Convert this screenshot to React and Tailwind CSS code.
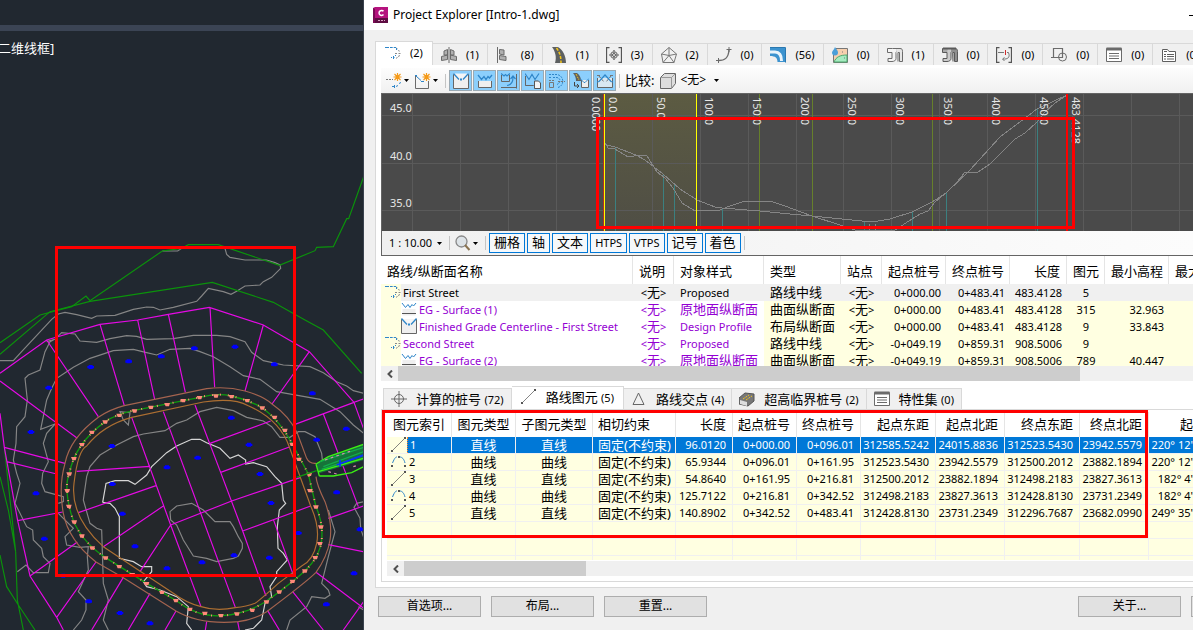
import { useState } from "react";
import clsx from "clsx";

// 16x16 icons used by the tabs, toolbars and tables
const ICONS = {
  alignment: (
    <g fill="none">
      <path d="M0 2.500h3M5 2.500h2M9 2.500h2M3.500 2v1M7.800 2v1" stroke="#2f86c9" />
      <path d="M11 3l1.500.8M13.500 5l.8 1.500" stroke="#8a8a8a" />
      <path d="M10 8.500h2M13.500 8.500h2" stroke="#8a8a8a" />
      <path d="M14.500 10l-1 2M12.500 12.500l-1.500.8" stroke="#8a8a8a" />
      <path d="M6 12.500h1M8.500 12.500h1M8.500 11v3M10.500 10v1M11.500 3v2" stroke="#2f86c9" />
    </g>
  ),
  assembly: (
    <g stroke="#6b6b6b" fill="#b0b0b0">
      <path d="M8 0v16" fill="none" />
      <path d="M6.500 2.500l-3.500 1.500v4h3.500zM6.500 8l-6 1.500v4l6-1z" />
      <path d="M9.500 2.500l3.500 1.500v4h-3.500zM9.500 8l6 1.500v4l-6-1z" />
    </g>
  ),
  subassembly: (
    <g stroke="#6b6b6b" fill="#b0b0b0">
      <path d="M1.500 0v16" fill="none" />
      <path d="M3.500 2.500l4.500.5v5l-4.500-1zM3.500 8.500l6.500 1v4l-6.500-1z" />
    </g>
  ),
  corridor: (
    <g>
      <path d="M1 0h6c5 3 8 9 8 16H4C6 10 4 4 1 0z" fill="#5d6061" />
      <path d="M5.500 1c3 4 4.500 8 4.500 15" stroke="#f5c518" strokeWidth="1.500" strokeDasharray="3 1.500" fill="none" />
    </g>
  ),
  pointGroup: (
    <g fill="none" stroke="#555">
      <path d="M3.500 .5H.5v15h3M12.500 .5h3v15h-3" strokeWidth="1.300" />
      <path d="M8 3v2M8 11v2M3.500 8h2M10.500 8h2" stroke="#777" strokeWidth="1.500" />
      <path d="M5.500 5.500h5v5h-5zM8 3.500L12.500 8 8 12.500 3.500 8z" stroke="#888" />
      <circle cx="8" cy="8" r="1.500" fill="#efefef" stroke="#555" />
    </g>
  ),
  surface: (
    <g fill="none" stroke="#777">
      <path d="M8 .5L15.500 7 13 15.500H2L.5 7z" />
      <path d="M8 .5v8L.5 7M8 8.500L15.500 7M8 8.500l-6 7M8 8.500l5 7" />
    </g>
  ),
  featureLine: (
    <g fill="none" stroke="#6b6b6b">
      <path d="M2.500 13.500c6 0 10-2 10.500-11" strokeWidth="1.300" />
      <path d="M0 13.500h5M2.500 11v5M10.500 2.500h5M13 0v5" />
    </g>
  ),
  pipe: (
    <g>
      <path d="M0 1h16v14H7.500c0-4-2-6-7.500-6z" fill="#3c93cf" />
      <path d="M0 5h5c4.500 0 6.500 3 6.500 9" fill="none" stroke="#e9f4fb" strokeWidth="3" />
      <path d="M0 .5h15.500v15" fill="none" stroke="#2a78b0" />
    </g>
  ),
  catchment: (
    <g>
      <path d="M4 1.500h11.500v14H1.500V8z" fill="#f6cfae" stroke="#777" />
      <path d="M2 15c2-5 6-7 13-7v7z" fill="#a5ebc0" stroke="#4ca76d" />
      <path d="M3 0c2 3 3 4 3 5.500a3 3 0 01-6 0C0 4 2 3 3 0z" fill="#4a9fd8" />
      <path d="M10 5h1M12 11h1" stroke="#777" />
    </g>
  ),
  network: (
    <g fill="none" stroke="#6b6b6b">
      <path d="M.5 1.500h5c2 0 2 3 1 4h-6z" fill="#f5f5f5" />
      <path d="M6 1.500h3c2 1 1 3 0 4v6c0 2-2 3-4 3H1v-3h4v-6" fill="#f5f5f5" />
      <path d="M9 1.500h4c2 0 2.500 1 2.500 3v10h-3v-9H11v9" fill="#e6e6e6" />
    </g>
  ),
  pressure: (
    <g fill="none" stroke="#5a5a5a">
      <path d="M.5 1.500h5c2 0 2 3 1 4h-6z" fill="#aaa" />
      <path d="M6 1.500h3c2 1 1 3 0 4v6c0 2-2 3-4 3H1v-3h4v-6" fill="#ccc" />
      <path d="M9 1.500h4c2 0 2.500 1 2.500 3v10h-3v-9H11v9" fill="#8f8f8f" />
      <path d="M1 1.500h13" strokeWidth="2" />
    </g>
  ),
  bracket: (
    <g fill="none" stroke="#555">
      <path d="M3.500.5h-3v15h3M12.500.5h3v15h-3" strokeWidth="1.300" />
      <path d="M2 5.500h6M11 5.500h1.500c2 5-1 7-5.500 6.500M8.500 10.500l-2 1.500 2 2" stroke="#777" />
      <path d="M9.500 3v5" stroke="#d12b2b" />
    </g>
  ),
  shapes: (
    <g fill="none" stroke="#6b6b6b">
      <path d="M2.500 1.500h9v9h-9zM0 10.500h4" strokeWidth="1.200" />
      <circle cx="11.500" cy="10" r="4" />
    </g>
  ),
  list: (
    <g fill="none" stroke="#6b6b6b">
      <path d="M.5 1.500h15v13H.5z" fill="#fff" />
      <path d="M.5 2h15" strokeWidth="3" />
      <path d="M3 6.500h10M3 9h10M3 11.500h10" />
    </g>
  ),
  report: (
    <g fill="none" stroke="#5f5f5f">
      <path d="M1.500 14.500v-12h5l1.500 2h6.500v10z" fill="#fff" />
      <path d="M3 7.500h2M6 7.500h7M3 9.500h2M6 9.500h7M3 12h2M6 12h7M3 4.500h3" />
    </g>
  ),
  newAlignment: (
    <g fill="none">
      <path d="M0 6.500h2M3 6.500h2M6 6.500h1" stroke="#777" />
      <path d="M14.500 9l-1 2M12 12.500l-2 1M6 13.500h3M8.500 12v3" stroke="#2f86c9" />
      <path d="M11.500 0v8M7.500 4h8M8.500 1l6 6M14.500 1l-6 6" stroke="#f59a18" strokeWidth="1.200" />
      <circle cx="11.500" cy="4" r="2" fill="#f59a18" />
    </g>
  ),
  newProfile: (
    <g fill="none">
      <path d="M.5 2v13.500h13V8" stroke="#6b6b6b" />
      <path d="M0 2.500h2M1 3l5 4.500M6 8.500h3" stroke="#2f86c9" />
      <path d="M11.500 0v8M7.500 4h8M8.500 1l6 6M14.500 1l-6 6" stroke="#f59a18" strokeWidth="1.200" />
      <circle cx="11.500" cy="4" r="2" fill="#f59a18" />
    </g>
  ),
  layoutProfile: (
    <g fill="none">
      <path d="M.5 1v14.500h15V1" stroke="#666" fill="#efefef" />
      <path d="M0 0h16v1l-6 6H6L0 1z" fill="#fff" fillOpacity=".4" />
      <path d="M.5 .5L6 6.500M10 6.500l5.500-6" stroke="#2f86c9" strokeWidth="1.300" />
      <path d="M7 6.500h2" stroke="#2f86c9" strokeWidth="2" />
    </g>
  ),
  surfaceProfile: (
    <g fill="none">
      <path d="M1.500 8v6.500h13V8" fill="#efefef" />
      <path d="M1 2l3.500 4.500L7 3.500l2 3 2-3 1.500 1.500L15 2" stroke="#2f86c9" />
      <path d="M1 12.500h14" stroke="#555" />
    </g>
  ),
  surfaceOutline: (
    <g fill="none">
      <path d="M1.500 8v6.500h13V8" stroke="#666" fill="#efefef" />
      <path d="M1 2l3.500 4.500L7 3.500l2 3 2-3 1.500 1.500L15 2" stroke="#2f86c9" strokeWidth="1.300" />
    </g>
  ),
  superimpose: (
    <g fill="none">
      <path d="M.5 2v6.500h8V2M15.500 1v14.500M0 14.500h16" stroke="#666" />
      <path d="M0 .5l3 2.500 1.500-1.500L6 3l3-2.500M6 12.500c4-.5 6-3 6-8M9.500 6L12 3l2.500 3" stroke="#2f86c9" strokeWidth="1.200" />
    </g>
  ),
  copyProfile: (
    <g fill="none">
      <path d="M.5 3v9.500h8M.5 12.500h8" stroke="#666" />
      <path d="M0 .5l4 6 3-5 3 5 4-6" stroke="#2f86c9" strokeWidth="1.200" />
      <path d="M9.500 8h4l2 2v5.500h-6z" stroke="#555" fill="#f4f4f4" />
    </g>
  ),
  offsets: (
    <g fill="none">
      <path d="M0 1.500h8c7 1 8 11 1 13M4 4.500h4c4 1 4 5 0 7M0 4.500h2" stroke="#2f86c9" strokeDasharray="2 1" />
      <path d="M9 8.500h7M0 7.500h6" stroke="#777" strokeDasharray="2 1" />
      <path d="M.5 9.500h4v5h-4z" stroke="#777" />
    </g>
  ),
  corridorProfile: (
    <g fill="none">
      <path d="M0 0h4c3 2 4 5 4 8H3C3 5 2 2 0 0z" fill="#5d6061" />
      <path d="M3 1l3 6" stroke="#f5c518" strokeDasharray="2 1" />
      <path d="M1.500 9v4h4M4 11l2 2-2 2" stroke="#444" />
      <path d="M8.500 7v7.500h7V7" stroke="#666" fill="#efefef" />
      <path d="M7 5.500l4 4h1l4-4" stroke="#2f86c9" />
    </g>
  ),
  crossing: (
    <g fill="none">
      <path d="M.5 5v9.500h15V5" stroke="#666" fill="#d9e8f2" />
      <path d="M0 2.500h3M13 2.500h3M2 3l5 6M14 3l-5 6" stroke="#777" strokeDasharray="3 1" />
      <path d="M0 9l2-.5L8 2l6 6.500 2 .5" stroke="#2f86c9" strokeWidth="1.200" />
    </g>
  ),
  cube: (
    <g stroke="#666">
      <path d="M.5 4.500l4-4h11v10l-4 5H.5z" fill="#ddd" />
      <path d="M.5 4.500h11v11M11.500 4.500l4-4" fill="none" stroke="#999" />
    </g>
  ),
  station: (
    <g fill="none" stroke="#666">
      <circle cx="8" cy="8" r="4.500" />
      <path d="M8 0v16M0 8h16" />
    </g>
  ),
  line: (
    <g>
      <path d="M2 13L13 2" stroke="#666" strokeWidth=".8" />
      <path d="M0 13h2v2H0zM13 0h2v2h-2z" fill="#555" />
    </g>
  ),
  arc: (
    <g>
      <path d="M1.500 9C4 3 5 3 6 3M9 3c2 0 4 2 5 6" stroke="#2f86c9" fill="none" />
      <path d="M0 11h2v2H0zM13 11h2v2h-2zM7 2h2v2H7z" fill="#555" />
    </g>
  ),
  triangle: <path d="M7.500 2L13 13.500H2z" fill="none" stroke="#666" />,
  superelevation: (
    <g>
      <path d="M0 7l6-5 9 1v7l-6 5-9-2z" fill="#777" stroke="#555" />
      <path d="M4 8l6-4M7 9l6-4" stroke="#f5c518" strokeDasharray="2 1" />
      <path d="M1 9l7 2v4l-7-2z" fill="#ddd" />
    </g>
  ),
  zoom: (
    <g fill="none">
      <circle cx="6.500" cy="6.500" r="5.500" stroke="#888" fill="#dde3e7" strokeWidth="1.300" />
      <path d="M10 10l4.500 5" stroke="#8a7350" strokeWidth="2" />
    </g>
  ),
};

function Icon({ name }) {
  return (
    <svg className="w-4 h-4 shrink-0" viewBox="0 0 16 16" aria-hidden="true">
      {ICONS[name]}
    </svg>
  );
}

function Caret() {
  return (
    <svg className="w-[5px] h-[3px] shrink-0 pointer-events-none" viewBox="0 0 5 3" aria-hidden="true">
      <path d="M0 0h5L2.500 3z" fill="#000" />
    </svg>
  );
}

function Divider() {
  return <span className="w-px h-[14px] bg-[#c4c4c4]" />;
}

const OBJECT_TABS = [
  ["alignment", "2", "路线"],
  ["assembly", "1", "装配"],
  ["subassembly", "8", "部件"],
  ["corridor", "1", "道路"],
  ["pointGroup", "3", "点组"],
  ["surface", "2", "曲面"],
  ["featureLine", "0", "要素线"],
  ["pipe", "56", "管道"],
  ["catchment", "0", "汇水区域"],
  ["network", "1", "管网"],
  ["pressure", "0", "压力管网"],
  ["bracket", "0", "块"],
  ["shapes", "0", "图形"],
  ["list", "0", "特性集"],
  ["report", "0", "报告"],
];

const TOGGLES = [
  ["layoutProfile", "布局纵断面"],
  ["surfaceOutline", "曲面纵断面"],
  ["superimpose", "叠加纵断面"],
  ["copyProfile", "复制纵断面"],
  ["offsets", "偏移路线"],
  ["corridorProfile", "道路纵断面"],
  ["crossing", "交叉"],
];

const VIEW_OPTIONS = ["栅格", "轴", "文本", "HTPS", "VTPS", "记号", "着色"];

const ALIGNMENTS = [
  { icon: "alignment", name: "First Street", style: "Proposed", type: "路线中线", start: "0+000.00", end: "0+483.41", length: "483.4128", count: "5", min: "", selected: true },
  { icon: "surfaceProfile", child: true, name: "EG - Surface (1)", style: "原地面纵断面", type: "曲面纵断面", start: "0+000.00", end: "0+483.41", length: "483.4128", count: "315", min: "32.963" },
  { icon: "layoutProfile", child: true, name: "Finished Grade Centerline - First Street", style: "Design Profile", type: "布局纵断面", start: "0+000.00", end: "0+483.41", length: "483.4128", count: "9", min: "33.843" },
  { icon: "alignment", name: "Second Street", style: "Proposed", type: "路线中线", start: "-0+049.19", end: "0+859.31", length: "908.5006", count: "9", min: "" },
  { icon: "surfaceProfile", child: true, name: "EG - Surface (2)", style: "原地面纵断面", type: "曲面纵断面", start: "-0+049.19", end: "0+859.31", length: "908.5006", count: "789", min: "40.447" },
];

const DETAIL_TABS = [
  ["station", "计算的桩号", "72"],
  ["line", "路线图元", "5"],
  ["triangle", "路线交点", "4"],
  ["superelevation", "超高临界桩号", "2"],
  ["list", "特性集", "0"],
];

const ENTITIES = [
  ["直线", "96.0120", "0+000.00", "0+096.01", "312585.5242", "24015.8836", "312523.5430", "23942.5579", "220° 12'"],
  ["曲线", "65.9344", "0+096.01", "0+161.95", "312523.5430", "23942.5579", "312500.2012", "23882.1894", "220° 12'"],
  ["直线", "54.8640", "0+161.95", "0+216.81", "312500.2012", "23882.1894", "312498.2183", "23827.3613", "182° 4'"],
  ["曲线", "125.7122", "0+216.81", "0+342.52", "312498.2183", "23827.3613", "312428.8130", "23731.2349", "182° 4'"],
  ["直线", "140.8902", "0+342.52", "0+483.41", "312428.8130", "23731.2349", "312296.7687", "23682.0990", "249° 35'"],
];

const ENTITY_HEADERS = ["长度", "起点桩号", "终点桩号", "起点东距", "起点北距", "终点东距", "终点北距", "起"];

const LOT_MARKS = [
  [272, 171], [386, 154], [484, 139], [583, 115], [705, 110], [823, 163], [937, 250], [146, 233], [93, 366],
  [108, 550], [133, 686], [336, 408], [337, 522], [367, 611], [405, 709], [501, 472], [593, 443], [694, 323],
  [747, 404], [780, 492], [813, 579], [808, 743], [702, 736], [606, 757], [501, 775], [895, 669], [950, 389],
  [1039, 356], [1010, 547], [1080, 658], [1062, 790], [979, 883], [266, 874], [360, 909], [450, 940], [190, 797],
];

const ROAD_MARKS = [
  [648, 257], [695, 259], [742, 271], [787, 293], [824, 321], [855, 360], [877, 402], [897, 447], [928, 492],
  [930, 541], [948, 590], [963, 650], [960, 700], [946, 742], [915, 782], [878, 813], [838, 845], [800, 875],
  [757, 900], [711, 911], [663, 916], [615, 909], [570, 897], [528, 871], [486, 846], [440, 820], [397, 793],
  [358, 769], [317, 743], [277, 713], [246, 677], [223, 635], [207, 588], [202, 541], [208, 491], [222, 445],
  [246, 403], [276, 366], [316, 335], [358, 315], [404, 302], [453, 291], [502, 283], [550, 271], [599, 262],
];

const CENTERLINE =
  "M400 302L600 262Q650 248 695 258T787 293Q840 332 877 402L925 492L948 590Q970 640 965 690T915 782Q880 815 800 873Q740 912 665 917T528 871L440 820L320 745Q235 690 213 610T208 491Q225 400 316 335Q350 312 400 302z";

function DrawingView() {
  return (
    <section className="w-[364px] shrink-0 bg-[#212830] flex flex-col overflow-hidden relative border-r border-[#3a424d]">
      <div className="h-[25px]" />
      <div className="h-[6px] bg-[#3b4454]" />
      <p className="text-white text-[13px] leading-[18px] mt-2 -ml-0.5">二维线框]</p>
      {/* Plan drawing, three units to a pixel */}
      <svg className="absolute left-0 top-0 w-[364px] h-[630px]" viewBox="0 0 1092 1890" fill="none" strokeWidth="3.500">
        <g transform="translate(0 930)">
          <path d="M180 560L180 480L240 370L370 300L650 240L800 280L890 370L990 640L940 780L720 930L600 930L280 740z" fill="#24272b" />
          <g stroke="#858585">
            <path d="M0 152H40L60 130L155 28L175 12L195 7L230 14L275 25L290 18L345 16L400-2L440-9L460-8L480 0L520-8L590-26L605-42L625-65L670-55L693-47L710-56L735-72L780-75L790-85L815-98L842-125L840-135L825-142L800-150L735-150L690-158L680-167L675-185M545-185L533-177H510L487-177" />
            <path d="M140 95L165 88L185 68L225 72L240 93L290 97L330 86L380 77L410 79L440 88L520 86L580 76L650 76L690 80L735 95L755 127L790 152L850 165L930 170L970 188L1010 215L1040 228L1060 242L1091 250" />
            <path d="M165 342L122 358L140 270L155 235L170 205L200 185L220 172L270 145L340 122L400 118L440 128L470 135L510 118L570 115L600 125L640 140L690 170L730 197L780 208L830 245L880 254L960 268L1020 305L1060 345L1091 370" />
            <path d="M165 342L140 370L130 400L145 455L128 490L125 520L135 545L190 560L190 575L175 580M175 610L220 655L195 680L200 705L240 712L265 710L262 740L265 780L235 845L258 870L258 900L245 930L220 960" />
            <path d="M160 90L150 95L135 125L120 180L85 195L75 205L82 270L75 320L50 350L48 400L40 450L50 490L60 520L45 580L80 650L98 660L100 690L125 715L130 740L150 760L145 788H100L78 765L52 785" />
            <path d="M325 960L310 930L325 870L310 820L305 660L290 655L270 640L250 570L260 500L270 470L300 435L350 405L400 380L430 372L495 362L530 340L560 330L600 305L650 292L700 302L740 322L790 333L815 350L840 382H870L895 365H915L945 380L965 430L970 480M360 305L390 308L385 345L370 330z" />
            <path d="M512 630L510 605L530 588L575 580L610 600L645 635H690L700 650L715 680L727 700V715L715 738L700 745L650 755L620 745L580 738L550 690L530 645z" />
            <path d="M985 600L1005 665L985 740L965 820L985 840L990 855L975 865L935 860L920 890L870 930L860 960M1091 575L1070 580L1062 592L1080 625L1082 655L1090 680M1075 890L1091 900" />
          </g>
          <g stroke="#d6d6d6">
            <path d="M308 577L318 520L345 512H385L405 523L440 495L455 470L500 428L530 408L575 388H600L620 398L660 415L690 445L715 435L737 450V462L760 458L800 470L825 500L845 520L850 570L857 580L838 600L832 650L834 715L850 730L862 750L830 785V800L810 830L815 860L795 880L785 930L760 955L735 960" />
            <path d="M308 577L330 580L345 595L358 620V745L400 755L425 770H455V785L430 815L440 830L480 840L530 860L565 890L560 940L575 960" />
          </g>
          <g stroke="#0b930b">
            <path d="M0 98L120 15L215-10L258-42L270-28L487-177L545-185L565-196H655L838-134L945-178L950-188L1000-190L1040-274H1046L1091-400" />
            <path d="M0 133L150 5L270-26L637-83L820-23L915 30L970 60L1085 190" />
            <path d="M13 412L47 725L52 870M0 500L25 600L47 725M0 735L20 830L55 885L105 960M52 870L70 960" />
          </g>
          <g stroke="#e60ae6">
            <path d="M0 190L140 90L300 43L413 30L505 13L628-8L790 45L928 125L1062 277L1091 267M300 43L373 287M413 30L464 268M505 13L556 247M630-8L644 232M790 45L735 243M928 125L816 282M140 90L295 320M0 213L232 385" />
            <path d="M1062 277L885 343M1062 277L1091 357M970 312L1075 590M985 625L1091 588M985 704L1091 725M948 787L1091 895M878 845L970 960M1091 875L1030 960M803 902L838 960M713 935L718 960M620 935L616 960M528 903L495 960M450 850L385 960M370 802L275 960M288 756L170 922M232 696L90 798M188 606L53 632M170 492L20 455M195 460L13 412M0 310L13 412L53 632L90 798L170 922L190 960" />
            <path d="M395 322L512 645L603 890M512 645L420 785M490 305L706 892M585 285L662 487L728 663L798 858M820 628L880 795M630 400L812 333M662 487L868 411M512 645L695 573L900 503M728 663L932 588M230 484L450 469M235 608L468 527M310 710L490 588" />
          </g>
          <path
            d="M948 500Q950 525 975 575Q998 640 990 690T948 787Q920 815 800 905Q760 930 715 935Q600 945 528 903L370 803L288 756Q205 690 190 610T195 460Q210 385 295 322Q330 298 373 287L620 236Q680 228 735 243T816 282Q868 318 892 370L920 445Q928 462 948 460"
            stroke="#a5644f"
          />
          <path
            d="M395 322L610 276Q700 262 745 287Q840 330 868 411L932 588Q960 650 950 700T905 768L835 820Q780 870 765 880Q740 890 706 893Q650 905 603 890Q560 880 520 850L310 710Q210 620 222 520T260 408Q310 345 395 322z"
            stroke="#ad6f32"
          />
          <path d={CENTERLINE} stroke="#0f990f" strokeWidth="4" />
          <path d={CENTERLINE} stroke="#ff8a7a" strokeWidth="6" strokeDasharray="3 21" />
          {ROAD_MARKS.map(([x, y]) => (
            <path key={`${x}-${y}`} d={`M${x - 9} ${y - 4}h17l-3 10h-10z`} fill="#ff8a7a" />
          ))}
          {LOT_MARKS.map(([x, y]) => (
            <path key={`${x}-${y}`} d={`M${x - 10} ${y - 3}h4v-3h12v3h4v7h-4v2h-12v-2h-4z`} fill="#0000ff" />
          ))}
          <g>
            <path d="M948 462L985 440L1091 403V450L958 490z" fill="#17733a" />
            <path d="M948 462L985 440L1091 403M958 498L1000 498L1055 488L1091 470M948 462L958 498M955 485L1091 445" stroke="#3cf014" strokeWidth="4" />
            <path d="M970 470L1091 425M965 478L1091 436M960 455L1091 412" stroke="#12b04a" />
            <path d="M1010 465L1091 435M1020 450V470" stroke="#0b2cff" strokeWidth="5" />
            <path d="M975 450L1050 424M985 485L1010 492M1060 470L1075 465" stroke="#d68ab0" strokeDasharray="8 10" />
            <path d="M890 502L950 482" stroke="#0f990f" />
          </g>
        </g>
        <path d="M169.500 742.500H883.500V1726.500H169.500z" stroke="#ff0000" strokeWidth="9" />
      </svg>
    </section>
  );
}

const GRID_X = [412, 460, 508, 556, 604, 652, 700, 748, 796, 843, 891, 939, 987, 1035, 1083, 1131, 1179];
const GRID_Y = [115, 163, 210];
const STATIONS = [
  [592, "0.0000"], [609, "0.0"], [657, "50.0"], [705, "100.0"], [753, "150.0"], [801, "200.0"], [848, "250.0"],
  [896, "300.0"], [944, "350.0"], [992, "400.0"], [1040, "450.0"], [1072, "483.4128"],
];
const ELEVATIONS = [[112, "45.0"], [160, "40.0"], [207, "35.0"]];
const PVI_LINES = [[615, 147], [663, 174], [674, 184], [722, 208], [864, 222], [912, 212], [946, 193], [1037, 109]];

function ProfileChart() {
  return (
    <svg className="block w-full h-[137px] bg-[#4a4a4a]" viewBox="382 94 811 137" preserveAspectRatio="xMinYMin slice" fill="none">
      <defs>
        <linearGradient id="entity" x1="0" y1="0" x2="0" y2="1">
          <stop offset="0" stopColor="#5c5b42" />
          <stop offset="1" stopColor="#4f4e45" />
        </linearGradient>
      </defs>
      <path d="M605 94h91v137h-91z" fill="url(#entity)" />
      <g stroke="#5a5a5a">
        {GRID_X.map((x) => <path key={x} d={`M${x + 0.5} 94v137`} />)}
        {GRID_Y.map((y) => <path key={y} d={`M382 ${y + 0.5}h2000`} />)}
      </g>
      <path d="M759.500 94v137M812.500 94v137M932.500 94v137" stroke="#66802b" />
      <g stroke="#3b8080">
        {PVI_LINES.map(([x, y]) => <path key={x} d={`M${x + 0.5} ${y}V231`} />)}
      </g>
      <g stroke="#858585" shapeRendering="crispEdges">
        <path d="M605 143L607 145L615 147L636 155L645 160L663 174L680 189L697 200L715 207L722 208L760 211L790 214L812 216L872 222L890 219L912 212L932 202L946 193L970 170L1000 137L1037 109L1067 95" />
        <path d="M605 143L608 148L615 149L628 157L640 155L647 156L657 172L665 178L673 188L682 203L695 211L720 210L727 207L745 201H770L785 206L801 212L812 216L840 225L855 230H895L912 219L920 214L928 211L935 202L946 193L957 182L965 172H978L990 164L1002 152L1015 139L1025 133L1037 122L1045 112L1055 103L1067 95M869 231V224M875 231V224" />
      </g>
      <g fill="#e6e6e6" fontSize="11">
        {ELEVATIONS.map(([y, label]) => <text key={label} x="390" y={y}>{label}</text>)}
        {STATIONS.map(([x, label]) => (
          <text key={label} transform={`translate(${x} 97) rotate(90)`}>{label}</text>
        ))}
      </g>
      <path d="M603.500 94v137" stroke="#b03020" />
      <path d="M604.500 94v137M696.500 94v137" stroke="#ffff00" />
      <path d="M1067 94v137" stroke="#ff0000" strokeWidth="2" />
      <path d="M597.500 118.500h476v109h-476z" stroke="#ff0000" strokeWidth="3" />
    </svg>
  );
}

function ProfileView() {
  const [shown, setShown] = useState(VIEW_OPTIONS);
  const toggle = (o) => setShown((s) => (s.includes(o) ? s.filter((v) => v !== o) : [...s, o]));

  return (
    <div className="border-l border-y border-[#646464]">
      <ProfileChart />
      <div className="h-6 flex items-center bg-gradient-to-r from-[#f0f0f0] to-[#fcfcfc] pl-[7px]">
        <label className="flex items-center gap-[5px]">
          <select aria-label="比例" className="appearance-none field-sizing-content text-[11px] leading-4">
            <option>1 : 10.00</option>
          </select>
          <Caret />
        </label>
        <span className="ml-[7px] mr-[5px] flex"><Divider /></span>
        <button aria-label="缩放" className="flex items-center gap-[2px]"><Icon name="zoom" /><Caret /></button>
        <span className="ml-[7px] mr-[3px] flex"><Divider /></span>
        <div className="flex gap-[2px]">
          {VIEW_OPTIONS.map((o) => (
            <button
              key={o}
              onClick={() => toggle(o)}
              aria-pressed={shown.includes(o)}
              className={clsx(
                "h-5 px-1 border leading-4 whitespace-nowrap",
                /^[A-Z]/.test(o) ? "text-[11px]" : "text-[13px] pb-[2px]",
                shown.includes(o) ? "border-[#0078d7] bg-[#f5f8fb]" : "border-transparent"
              )}
            >
              {o}
            </button>
          ))}
        </div>
        <span className="ml-[3px] flex"><Divider /></span>
      </div>
    </div>
  );
}

function Toolbar() {
  const [pressed, setPressed] = useState(TOGGLES.map(([icon]) => icon));
  const toggle = (i) => setPressed((p) => (p.includes(i) ? p.filter((v) => v !== i) : [...p, i]));

  return (
    <div className="h-[25px] flex items-center bg-gradient-to-b from-[#fdfdfd] to-[#f0f0f0] pl-[5px]">
      <button aria-label="新建路线" className="flex items-center gap-[2px]"><Icon name="newAlignment" /><Caret /></button>
      <button aria-label="新建纵断面" className="flex items-center gap-[2px] ml-[6px]"><Icon name="newProfile" /><Caret /></button>
      <span className="ml-[7px] mr-[3px] flex"><Divider /></span>
      <div className="flex gap-px">
        {TOGGLES.map(([icon, label]) => (
          <button
            key={icon}
            aria-label={label}
            aria-pressed={pressed.includes(icon)}
            onClick={() => toggle(icon)}
            className={clsx(
              "w-[23px] h-[21px] border flex items-center justify-center",
              pressed.includes(icon) ? "bg-[#8ccffc] border-[#9aa9b3]" : "border-transparent"
            )}
          >
            <Icon name={icon} />
          </button>
        ))}
      </div>
      <span className="ml-[3px] mr-[5px] flex"><Divider /></span>
      <label htmlFor="compare" className="text-[13px] leading-4 mr-[6px] pb-[2px]">比较:</label>
      <Icon name="cube" />
      <select id="compare" className="appearance-none field-sizing-content text-[12px] leading-4 ml-1 pb-[2px]">
        <option>&lt;无&gt;</option>
      </select>
      <span className="ml-2 flex"><Caret /></span>
    </div>
  );
}

function None() {
  return (
    <span>
      &lt;<span className="text-[13px] leading-none">无</span>&gt;
    </span>
  );
}

function AlignmentTable() {
  const th = "font-normal text-[13px] border-r border-[#e5e5e5] px-[6px] pt-[2px] h-7";
  return (
    <div>
      <div className="h-[110px] overflow-hidden">
        <table className="w-full table-fixed border-separate border-spacing-0 whitespace-nowrap text-[11px] leading-[17px]">
          <colgroup>
            <col className="w-[252px]" />
            <col className="w-[41px]" />
            <col className="w-[90px]" />
            <col className="w-[77px]" />
            <col className="w-[41px]" />
            <col className="w-[64px]" />
            <col className="w-[64px]" />
            <col className="w-[57px]" />
            <col className="w-[38px]" />
            <col className="w-[64px]" />
            <col />
          </colgroup>
          <thead>
            <tr>
              <th className={clsx(th, "text-left")}>路线/纵断面名称</th>
              <th className={clsx(th, "text-left")}>说明</th>
              <th className={clsx(th, "text-left")}>对象样式</th>
              <th className={clsx(th, "text-left")}>类型</th>
              <th className={clsx(th, "text-left")}>站点</th>
              <th className={clsx(th, "text-right")}>起点桩号</th>
              <th className={clsx(th, "text-right")}>终点桩号</th>
              <th className={clsx(th, "text-right")}>长度</th>
              <th className={clsx(th, "text-left")}>图元</th>
              <th className={clsx(th, "text-right")}>最小高程</th>
              <th className="font-normal text-[13px] pl-[6px] pt-[2px] text-left overflow-hidden">最大</th>
            </tr>
          </thead>
          <tbody>
            {ALIGNMENTS.map((a) => {
              const tint = a.selected ? "bg-[#f0f0f0]" : "bg-[#ffffe1]";
              const own = a.selected ? "bg-[#f0f0f0]" : "bg-white text-[#9400d3]";
              return (
                <tr key={a.name} className="h-[17px]">
                  <td className="p-0">
                    <div className="flex h-[17px]">
                      <span className="w-5 shrink-0 bg-[#ffffe1] pl-1">{!a.child && <Icon name={a.icon} />}</span>
                      <span className={clsx("flex flex-1 gap-[2px]", own, !a.child && "pl-[2px]")}>
                        {a.child && <Icon name={a.icon} />}
                        {a.name}
                      </span>
                    </div>
                  </td>
                  <td className={clsx("p-0 text-center", own)}><None /></td>
                  <td className={clsx("p-0 pl-[6px]", own, a.style.startsWith("原") && "text-[13px]")}>{a.style}</td>
                  <td className={clsx("p-0 pl-[6px] text-[13px]", tint)}>{a.type}</td>
                  <td className={clsx("p-0 text-center", tint)}><None /></td>
                  <td className={clsx("p-0 pr-[5px] text-right", tint)}>{a.start}</td>
                  <td className={clsx("p-0 pr-[5px] text-right", tint)}>{a.end}</td>
                  <td className={clsx("p-0 pr-[5px] text-right", tint)}>{a.length}</td>
                  <td className={clsx("p-0 text-center", tint)}>{a.count}</td>
                  <td className={clsx("p-0 pr-[5px] text-right", tint)}>{a.min}</td>
                  <td className={tint} />
                </tr>
              );
            })}
          </tbody>
        </table>
      </div>
      <ScrollBar thumb="w-[682px]" />
    </div>
  );
}

function ScrollBar({ thumb }) {
  return (
    <div className="h-[15px] flex bg-[#f0f0f0]">
      <button aria-label="向左滚动" className="w-[17px] flex items-center justify-center">
        <svg className="w-[6px] h-2" viewBox="0 0 6 8" aria-hidden="true">
          <path d="M5 .5L1.500 4 5 7.500" fill="none" stroke="#505050" strokeWidth="2" />
        </svg>
      </button>
      <span className={clsx("bg-[#cdcdcd]", thumb)} />
    </div>
  );
}

function EntityTable() {
  const [selected, setSelected] = useState(0);
  const th = "font-normal text-[13px] h-[25px] p-0 pb-[2px] border-r border-[#e5e5e5]";

  return (
    <div>
      <div className="h-[148px] overflow-hidden">
        <table className="w-full table-fixed border-separate border-spacing-0 whitespace-nowrap text-[11px] leading-4">
          <colgroup>
            <col className="w-[65px]" />
            <col className="w-[64px]" />
            <col className="w-[77px]" />
            <col className="w-[83px]" />
            <col className="w-[57px]" />
            <col className="w-[64px]" />
            <col className="w-[64px]" />
            <col className="w-[75px]" />
            <col className="w-[69px]" />
            <col className="w-[75px]" />
            <col className="w-[69px]" />
            <col className="w-[51px]" />
          </colgroup>
          <thead>
            <tr>
              <th className={clsx(th, "pl-[6px] text-left")}>图元索引</th>
              <th className={th}>图元类型</th>
              <th className={th}>子图元类型</th>
              <th className={clsx(th, "pl-[5px] text-left")}>相切约束</th>
              {ENTITY_HEADERS.map((h) => (
                <th key={h} className={clsx(th, "pr-[6px] text-right")}>{h}</th>
              ))}
            </tr>
          </thead>
          <tbody>
            {ENTITIES.map(([type, ...values], i) => {
              const active = i === selected;
              const td = clsx(
                "p-0 h-[17px] border-r border-b border-[#f0f0f0]",
                active ? "bg-[#0078d7] text-white" : "bg-[#ffffe1]"
              );
              return (
                <tr key={i} onClick={() => setSelected(i)}>
                  <td className={td}>
                    <div className="flex">
                      <span className="w-5 h-4 shrink-0 bg-[#ffffe1] pl-1"><Icon name={type === "直线" ? "line" : "arc"} /></span>
                      <span className={clsx("pl-[2px]", active && "flex-1 border-l border-dotted border-[#ff8728]")}>{i + 1}</span>
                    </div>
                  </td>
                  <td className={clsx(td, "text-center text-[13px]")}>{type}</td>
                  <td className={clsx(td, "text-center text-[13px]")}>{type}</td>
                  <td className={clsx(td, "pl-[5px] text-[13px]")}>固定(不约束)</td>
                  {values.map((v, n) => (
                    <td key={n} className={clsx(td, "pr-[6px] text-right")}>{v}</td>
                  ))}
                </tr>
              );
            })}
            {[0, 1, 2].map((r) => (
              <tr key={r}>
                {Array.from({ length: 12 }, (_, c) => (
                  <td key={c} className="p-0 h-[17px] border-r border-b border-[#f0f0f0] bg-[#ffffe1]" />
                ))}
              </tr>
            ))}
          </tbody>
        </table>
      </div>
      <div className="pt-px"><ScrollBar thumb="w-[182px]" /></div>
    </div>
  );
}

function PushButton({ children, className }) {
  return (
    <button className={clsx("w-[103px] h-[21px] shrink-0 border border-[#adadad] bg-[#e1e1e1] text-[12px] leading-4 pb-[2px]", className)}>
      {children}
    </button>
  );
}

function ProjectExplorer() {
  const [tab, setTab] = useState(0);
  const [detail, setDetail] = useState(1);

  return (
    <section className="flex-1 min-w-0 flex flex-col bg-[#f0f0f0] overflow-hidden">
      <header className="h-[30px] shrink-0 bg-white flex items-center pl-[9px] gap-[5px]">
        <svg className="w-[15px] h-4" viewBox="0 0 15 16" aria-hidden="true">
          <path d="M0 1l2-1h13v15H0z" fill="#b5127e" />
          <path d="M0 1l2 1v14H0z" fill="#7a0a54" />
          <path d="M2 11h13v5H2z" fill="#5e0c42" />
          <path d="M10.500 4.300a2.500 2.500 0 100 3.200" fill="none" stroke="#fff" strokeWidth="1.500" />
          <path d="M5 13.500h7" stroke="#d9a3c4" strokeDasharray="2 1" />
        </svg>
        <h1 className="text-[12px] leading-4">Project Explorer [Intro-1.dwg]</h1>
        <button aria-label="最小化" className="ml-auto w-1 h-px bg-black" />
      </header>

      <div className="pt-[11px] pl-[11px]">
        <div role="tablist" className="flex items-end h-6 overflow-hidden">
          {OBJECT_TABS.map(([icon, count, label], i) => (
            <button
              key={icon}
              role="tab"
              aria-label={label}
              aria-selected={tab === i}
              onClick={() => setTab(i)}
              className={clsx(
                "shrink-0 flex items-center gap-[9px] border-t border-r border-[#d9d9d9] text-[11px] leading-4",
                tab === i ? "relative z-10 h-6 px-[9px] pb-[2px] border-l bg-white" : "h-[22px] px-2 bg-[#f0f0f0]"
              )}
            >
              <Icon name={icon} />
              ({count})
            </button>
          ))}
        </div>

        <div className="-mt-px border-t border-l border-b border-[#d9d9d9] bg-white pt-[3px] pl-[5px] pb-[5px]">
          <Toolbar />
          <ProfileView />
          <AlignmentTable />

          <div role="tablist" className="flex items-end h-[23px] mt-[5px] pl-[2px]">
            {DETAIL_TABS.map(([icon, label, count], i) => (
              <button
                key={label}
                role="tab"
                aria-selected={detail === i}
                onClick={() => setDetail(i)}
                className={clsx(
                  "shrink-0 flex items-center gap-[9px] border-t border-r border-[#d9d9d9] whitespace-nowrap leading-4",
                  detail === i ? "h-[23px] px-[9px] pb-[2px] bg-white" : "h-[21px] px-[7px] bg-[#f0f0f0]",
                  i === 0 && "border-l"
                )}
              >
                <Icon name={icon} />
                <span className="text-[13px]">
                  {label} <span className="text-[11px]">({count})</span>
                </span>
              </button>
            ))}
          </div>

          <div className="relative border-l border-t border-b border-[#d9d9d9] pl-[5px] pt-[2px] pb-[5px]">
            <EntityTable />
            <div className="absolute left-0 top-0 w-[766px] h-32 border-3 border-[#ff0000] pointer-events-none" />
          </div>
        </div>
      </div>

      <footer className="flex gap-[10px] pl-[14px] pt-2">
        <PushButton>首选项...</PushButton>
        <PushButton>布局...</PushButton>
        <PushButton>重置...</PushButton>
        <PushButton className="ml-auto">关于...</PushButton>
        <span className="w-[2px] h-[21px] border-l border-y border-[#adadad] bg-[#e1e1e1]" />
      </footer>
    </section>
  );
}

export default function App() {
  return (
    <main className="min-h-screen flex text-black overflow-hidden font-['Noto_Sans','Noto_Sans_CJK_SC',sans-serif]">
      <DrawingView />
      <ProjectExplorer />
    </main>
  );
}
